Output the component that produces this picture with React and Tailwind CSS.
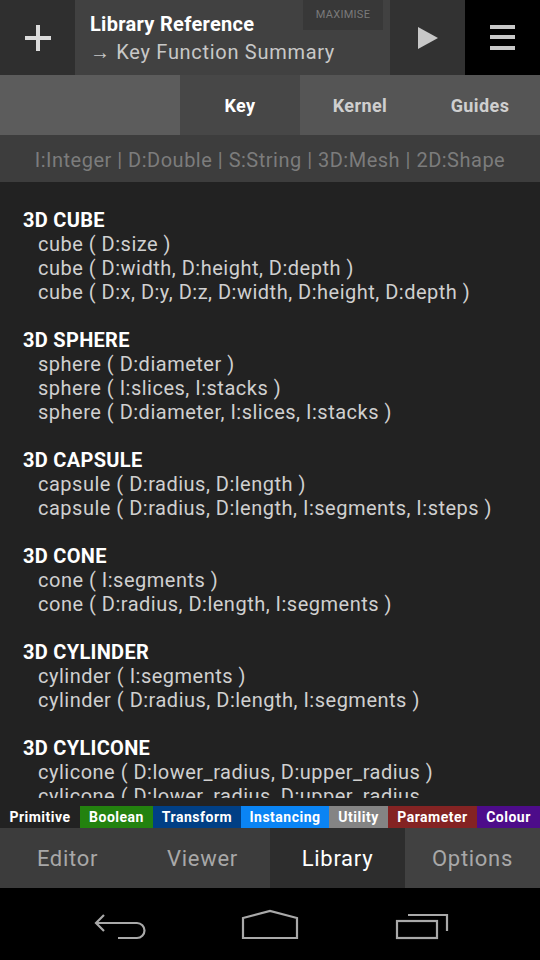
import React from "react";

const sections = [
  ["3D CUBE", ["cube ( D:size )", "cube ( D:width, D:height, D:depth )", "cube ( D:x, D:y, D:z, D:width, D:height, D:depth )"]],
  ["3D SPHERE", ["sphere ( D:diameter )", "sphere ( I:slices, I:stacks )", "sphere ( D:diameter, I:slices, I:stacks )"]],
  ["3D CAPSULE", ["capsule ( D:radius, D:length )", "capsule ( D:radius, D:length, I:segments, I:steps )"]],
  ["3D CONE", ["cone ( I:segments )", "cone ( D:radius, D:length, I:segments )"]],
  ["3D CYLINDER", ["cylinder ( I:segments )", "cylinder ( D:radius, D:length, I:segments )"]],
  ["3D CYLICONE", ["cylicone ( D:lower_radius, D:upper_radius )", "cylicone ( D:lower_radius, D:upper_radius"]],
];

const cats = [
  ["Primitive", "w-[80px] bg-[#222222]"],
  ["Boolean", "w-[73px] bg-[#23820f]"],
  ["Transform", "w-[88px] bg-[#003f85]"],
  ["Instancing", "w-[88px] bg-[#0a84f4]"],
  ["Utility", "w-[59px] bg-[#848484]"],
  ["Parameter", "w-[89px] bg-[#842323]"],
  ["Colour", "w-[63px] bg-[#4d0c8a]"],
];

export default function App() {
  return (
    <div className="w-[540px] h-[960px] flex flex-col bg-black overflow-hidden" style={{ fontFamily: "Roboto, 'Noto Sans', sans-serif" }}>
      {/* Top bar */}
      <div className="h-[75px] flex shrink-0">
        <div className="w-[75px] bg-[#2f2f2f] flex items-center justify-center">
          <svg width="26" height="26" viewBox="0 0 26 26">
            <rect x="11" y="0" width="4" height="26" fill="#dcdcdc" />
            <rect x="0" y="11" width="26" height="4" fill="#dcdcdc" />
          </svg>
        </div>
        <div className="w-[315px] bg-[#414141] relative pl-[15px] pt-[10px]">
          <div className="text-[20px] leading-[28px] font-bold text-white tracking-[0.3px]">Library Reference</div>
          <div className="text-[20px] leading-[28px] text-[#c8c8c8] tracking-[0.7px]">→ Key Function Summary</div>
          <div className="absolute top-0 left-[228px] w-[80px] h-[30px] bg-[#383838] flex items-center justify-center text-[11px] text-[#7a7a7a] tracking-wide">MAXIMISE</div>
        </div>
        <div className="w-[75px] bg-[#323232] flex items-center justify-center">
          <svg width="20" height="22" viewBox="0 0 20 22">
            <polygon points="0,0 20,11 0,22" fill="#c8c8c8" />
          </svg>
        </div>
        <div className="w-[75px] bg-black flex items-center justify-center">
          <svg width="25" height="25" viewBox="0 0 25 25">
            <rect x="0" y="0" width="25" height="4" fill="#c8c8c8" />
            <rect x="0" y="10" width="25" height="4" fill="#c8c8c8" />
            <rect x="0" y="21" width="25" height="4" fill="#c8c8c8" />
          </svg>
        </div>
      </div>

      {/* Tabs */}
      <div className="h-[60px] flex shrink-0 text-[18px] font-bold tracking-[0.4px]">
        <div className="w-[180px] bg-[#5c5c5c]" />
        <div className="w-[120px] bg-[#474747] flex items-center justify-center text-white">Key</div>
        <div className="w-[120px] bg-[#555555] flex items-center justify-center text-[#cfcfcf]">Kernel</div>
        <div className="w-[120px] bg-[#555555] flex items-center justify-center text-[#cfcfcf]">Guides</div>
      </div>

      {/* Legend */}
      <div className="h-[47px] shrink-0 bg-[#3d3d3d] flex items-center justify-center text-[20px] tracking-[0.5px] text-[#7c7c7c] pt-[2px]">
        I:Integer | D:Double | S:String | 3D:Mesh | 2D:Shape
      </div>

      {/* Content */}
      <div className="h-[624px] shrink-0 bg-[#222222] pb-[8px]">
        <div className="h-full overflow-hidden pt-[26px] pl-[23px] text-[20px] leading-[24px]">
          {sections.map(([h, items]) => (
            <div key={h} className="mb-[24px]">
              <div className="font-bold text-white tracking-[0.3px]">{h}</div>
              {items.map((it) => (
                <div key={it} className="pl-[15px] text-[#d0d0d0] whitespace-nowrap tracking-[0.5px]">{it}</div>
              ))}
            </div>
          ))}
        </div>
      </div>

      {/* Categories */}
      <div className="h-[22px] shrink-0 flex text-[14px] font-bold text-white tracking-[0.5px]">
        {cats.map(([n, c]) => (
          <div key={n} className={`${c} flex items-center justify-center`}>{n}</div>
        ))}
      </div>

      {/* Bottom tabs */}
      <div className="h-[60px] shrink-0 flex text-[22px] tracking-[0.7px]">
        <div className="w-[135px] bg-[#3c3c3c] flex items-center justify-center text-[#a8a8a8]">Editor</div>
        <div className="w-[135px] bg-[#3c3c3c] flex items-center justify-center text-[#a8a8a8]">Viewer</div>
        <div className="w-[135px] bg-[#2d2d2d] flex items-center justify-center text-white">Library</div>
        <div className="w-[135px] bg-[#414141] flex items-center justify-center text-[#a8a8a8]">Options</div>
      </div>

      {/* Nav bar */}
      <div className="flex-1 bg-black relative">
        <svg width="540" height="72" viewBox="0 888 540 72" className="absolute inset-0">
          <g fill="none" stroke="#a9a9a9" strokeWidth="2.2">
            <path d="M96 923 H137 A7.5 7.5 0 0 1 137 938 H118" />
            <path d="M104 915 L96 923 L104 931" />
            <path d="M243 938 V918 L270 911 L297 918 V938 Z" />
            <rect x="397" y="921" width="40" height="17" />
            <path d="M408 915 H447 V931" />
          </g>
        </svg>
      </div>
    </div>
  );
}
